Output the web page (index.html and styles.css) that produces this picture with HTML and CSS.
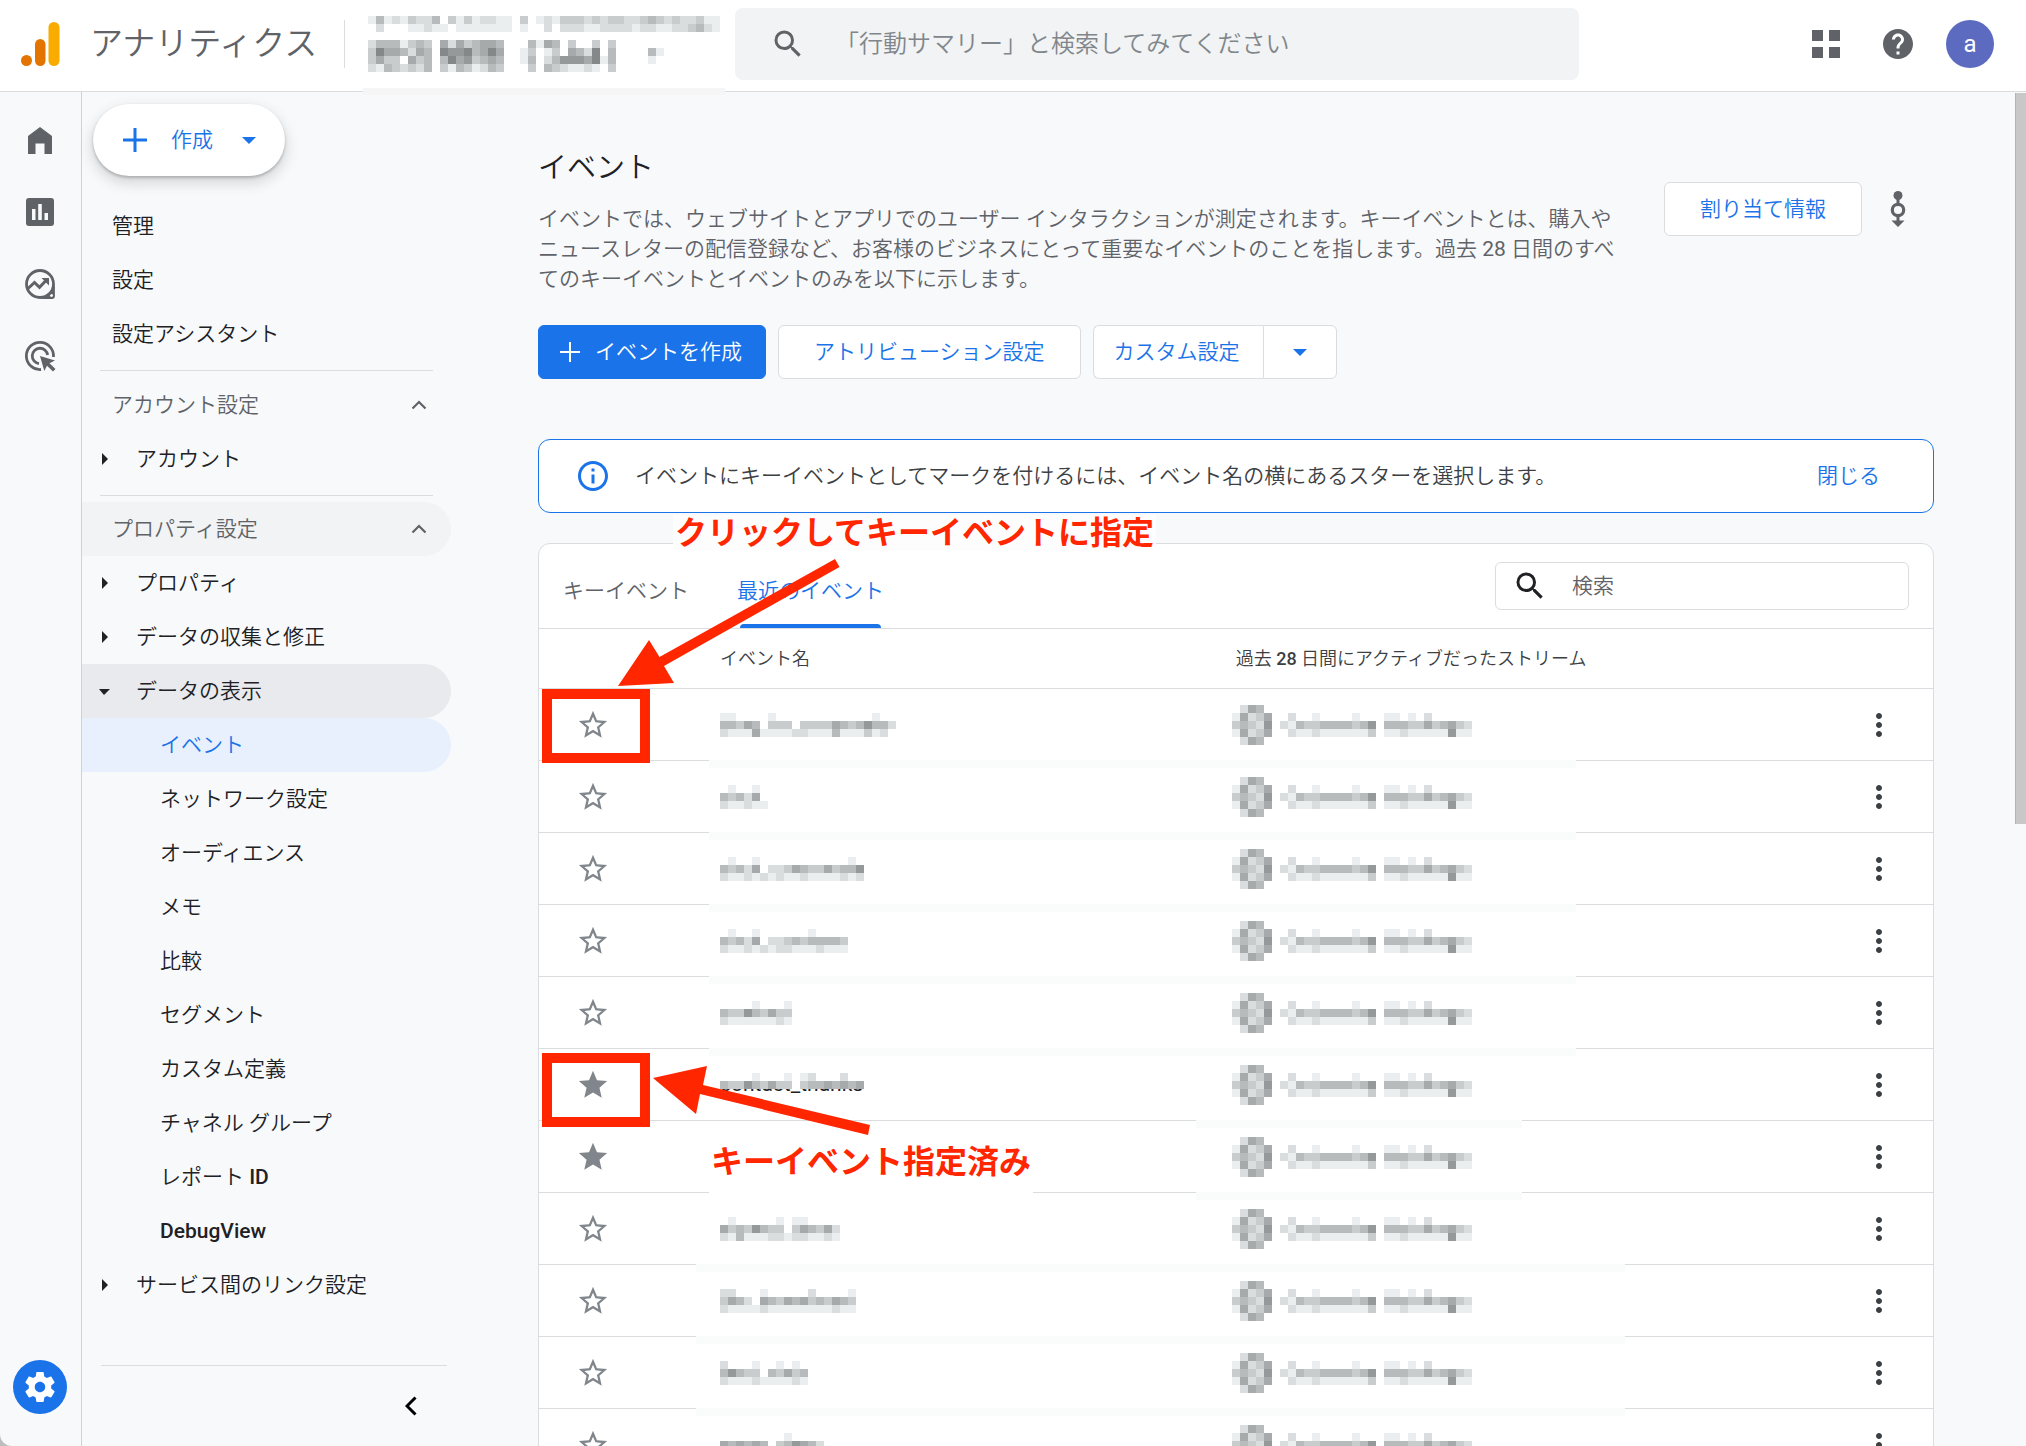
FILE: index.html
```html
<!DOCTYPE html>
<html lang="ja">
<head>
<meta charset="utf-8">
<title>アナリティクス</title>
<meta name="viewport" content="width=device-width, initial-scale=1">
<link rel="stylesheet" href="styles.css">
</head>
<body>
<svg class="sprite" aria-hidden="true">
  <symbol id="star" viewBox="0 0 24 24"><path d="M22 9.24l-7.19-.62L12 2 9.19 8.63 2 9.24l5.46 4.73L5.82 21 12 17.27 18.18 21l-1.63-7.03L22 9.24zM12 15.4l-3.76 2.27 1-4.28-3.32-2.88 4.38-.38L12 6.1l1.71 4.04 4.38.38-3.32 2.88 1 4.28L12 15.4z"/></symbol>
  <symbol id="star-full" viewBox="0 0 24 24"><path d="M12 17.27L18.18 21l-1.64-7.03L22 9.24l-7.19-.61L12 2 9.19 8.63 2 9.24l5.46 4.73L5.82 21z"/></symbol>
  <symbol id="more" viewBox="0 0 24 24"><path d="M12 8c1.1 0 2-.9 2-2s-.9-2-2-2-2 .9-2 2 .9 2 2 2zm0 2c-1.1 0-2 .9-2 2s.9 2 2 2 2-.9 2-2-.9-2-2-2zm0 6c-1.1 0-2 .9-2 2s.9 2 2 2 2-.9 2-2-.9-2-2-2z"/></symbol>
  <symbol id="search" viewBox="0 0 24 24"><path d="M15.5 14h-.79l-.28-.27A6.47 6.47 0 0 0 16 9.5 6.5 6.5 0 1 0 9.5 16c1.61 0 3.09-.59 4.23-1.57l.27.28v.79l5 4.99L20.49 19l-4.99-5zm-6 0C7.01 14 5 11.99 5 9.5S7.01 5 9.5 5 14 7.01 14 9.5 11.99 14 9.5 14z"/></symbol>
  <symbol id="caret" viewBox="0 0 14 7"><path d="M0 0h14L7 7z"/></symbol>
  <symbol id="chevron-up" viewBox="0 0 16 10"><path d="M1.500 8.500L8 2l6.500 6.500" fill="none" stroke="currentColor" stroke-width="2.200"/></symbol>
</svg>

<div class="app">
  <header class="topbar">
    <a class="brand" href="#">
      <svg class="brand-logo" viewBox="0 0 40 46" aria-hidden="true">
        <circle cx="6.500" cy="39.500" r="5.500" fill="#e37400"/>
        <rect x="15" y="18" width="10.500" height="27" rx="5.250" fill="#e37400"/>
        <rect x="28.500" y="1" width="11" height="44" rx="5.500" fill="#f9ab00"/>
      </svg>
      <span class="brand-name">アナリティクス</span>
    </a>
    <div class="property">
      <svg class="mosaic" data-rows="ebedecddbfceceddeefcfedecccdcdccddcbcdcddcee fdfffeedeefeeeeeeefeffdfdddeeddddeddeeddcbde . dbbbecbcfadacbaabfffbeabfcffcfc c8aabdabf8998ba8affecfecfabd8fbffffbe caccfacbfb8a9cbabffebfdb999a8ebffffe debcdcdbfcebcedbcfffcfbcdeedefc"></svg>
    </div>
    <label class="top-search">
      <svg class="icon" aria-hidden="true"><use href="#search"/></svg>
      <input type="search" aria-label="検索" placeholder="「行動サマリー」と検索してみてください">
    </label>
    <div class="top-actions">
      <button class="icon-button" type="button" aria-label="アプリ">
        <svg class="icon" viewBox="0 0 36 36" aria-hidden="true"><path d="M4 4h11v11H4zM21 4h11v11H21zM4 21h11v11H4zM21 21h11v11H21z"/></svg>
      </button>
      <button class="icon-button" type="button" aria-label="ヘルプ">
        <svg class="icon" viewBox="0 0 24 24" aria-hidden="true"><path d="M12 2C6.480 2 2 6.480 2 12s4.480 10 10 10 10-4.480 10-10S17.520 2 12 2zm1 17h-2v-2h2v2zm2.070-7.750l-.9.920C13.450 12.900 13 13.500 13 15h-2v-.5c0-1.100.45-2.100 1.170-2.830l1.240-1.260c.37-.36.59-.86.59-1.410 0-1.100-.9-2-2-2s-2 .9-2 2H8c0-2.210 1.790-4 4-4s4 1.790 4 4c0 .88-.36 1.680-.93 2.250z"/></svg>
      </button>
      <button class="avatar" type="button">a</button>
    </div>
  </header>

  <div class="body">
    <nav class="rail" aria-label="メイン">
      <a href="#" aria-label="ホーム"><svg class="icon" viewBox="0 0 36 36" aria-hidden="true"><path d="M18 5L6 14v18h7.500V21.500h9V32H30V14z"/></svg></a>
      <a href="#" aria-label="レポート"><svg class="icon" viewBox="0 0 36 36" aria-hidden="true"><path fill-rule="evenodd" d="M7 4h22a3 3 0 0 1 3 3v22a3 3 0 0 1-3 3H7a3 3 0 0 1-3-3V7a3 3 0 0 1 3-3zm3 11v11h3.500V15zm6.200-5v16h3.600V10zm6.300 9v7H26v-7z"/></svg></a>
      <a href="#" aria-label="探索"><svg class="icon" viewBox="0 0 36 36" aria-hidden="true"><circle cx="18" cy="18" r="13.500" fill="none" stroke="currentColor" stroke-width="2.800"/><path fill-rule="evenodd" d="M32.900 18v12.500a2.400 2.400 0 0 1-2.400 2.400H18C24 32 31 27 32.900 18zM29.500 28a1.500 1.500 0 1 0 .01 0z"/><path d="M5.500 23l7-6.500 5 4.800 7-7.300" fill="none" stroke="currentColor" stroke-width="3"/><path d="M19.500 12H27v7.500z"/></svg></a>
      <a href="#" aria-label="広告"><svg class="icon" viewBox="0 0 36 36" aria-hidden="true"><path d="M19 31.500A13.600 13.600 0 1 1 31.500 19M17 25.600A7.700 7.700 0 1 1 25.600 17" fill="none" stroke="currentColor" stroke-width="2.800"/><path d="M18 18l15 4.500-5.500 2.700 6 5.800-2.500 2.500-6-5.800-2.700 5.300z"/></svg></a>
      <a class="rail-admin" href="#" aria-label="管理"><svg class="icon" viewBox="0 0 24 24" aria-hidden="true"><path fill-rule="evenodd" d="M19.430 12.980c.04-.32.07-.64.07-.98s-.03-.66-.07-.98l2.110-1.650c.19-.15.24-.42.12-.64l-2-3.460c-.12-.22-.39-.3-.61-.22l-2.490 1c-.52-.4-1.080-.73-1.690-.98l-.38-2.650C14.460 2.180 14.250 2 14 2h-4c-.25 0-.46.18-.49.42l-.38 2.650c-.61.25-1.170.59-1.690.98l-2.490-1c-.23-.09-.49 0-.61.22l-2 3.460c-.13.22-.07.49.12.64l2.110 1.650c-.04.32-.07.65-.07.98s.03.66.07.98l-2.110 1.650c-.19.15-.24.42-.12.64l2 3.460c.12.22.39.3.61.22l2.490-1c.52.4 1.080.73 1.690.98l.38 2.650c.03.24.24.42.49.42h4c.25 0 .46-.18.49-.42l.38-2.650c.61-.25 1.170-.59 1.690-.98l2.490 1c.23.09.49 0 .61-.22l2-3.460c.12-.22.07-.49-.12-.64l-2.110-1.650zM12 15.500c-1.930 0-3.500-1.570-3.500-3.500s1.570-3.500 3.500-3.500 3.500 1.570 3.500 3.500-1.570 3.500-3.500 3.500z"/></svg></a>
    </nav>

    <aside class="sidenav">
      <button class="create" type="button">
        <svg class="plus" viewBox="0 0 24 24" aria-hidden="true"><path d="M10.500 0h3v10.500H24v3H13.500V24h-3V13.500H0v-3h10.500z"/></svg>
        作成
        <svg class="caret" aria-hidden="true"><use href="#caret"/></svg>
      </button>
      <nav aria-label="管理">
        <ul>
          <li><a class="item" href="#">管理</a></li>
          <li><a class="item" href="#">設定</a></li>
          <li><a class="item" href="#">設定アシスタント</a></li>
        </ul>
        <hr>
        <button class="item section" type="button">アカウント設定<svg class="chevron" aria-hidden="true"><use href="#chevron-up"/></svg></button>
        <ul>
          <li><a class="item group" href="#">アカウント</a></li>
        </ul>
        <hr>
        <button class="item section is-hover" type="button">プロパティ設定<svg class="chevron" aria-hidden="true"><use href="#chevron-up"/></svg></button>
        <ul>
          <li><a class="item group" href="#">プロパティ</a></li>
          <li><a class="item group" href="#">データの収集と修正</a></li>
          <li><a class="item group is-open" href="#">データの表示</a>
            <ul>
              <li><a class="item sub is-active" href="#">イベント</a></li>
              <li><a class="item sub" href="#">ネットワーク設定</a></li>
              <li><a class="item sub" href="#">オーディエンス</a></li>
              <li><a class="item sub" href="#">メモ</a></li>
              <li><a class="item sub" href="#">比較</a></li>
              <li><a class="item sub" href="#">セグメント</a></li>
              <li><a class="item sub" href="#">カスタム定義</a></li>
              <li><a class="item sub" href="#">チャネル グループ</a></li>
              <li><a class="item sub" href="#">レポート <span class="latin">ID</span></a></li>
              <li><a class="item sub" href="#"><span class="latin">DebugView</span></a></li>
            </ul>
          </li>
          <li><a class="item group" href="#">サービス間のリンク設定</a></li>
        </ul>
      </nav>
      <div class="sidenav-foot">
        <button class="collapse" type="button" aria-label="折りたたむ">
          <svg viewBox="0 0 12 20" aria-hidden="true"><path d="M10.500 1.500L2 10l8.500 8.500" fill="none" stroke="#000" stroke-width="3"/></svg>
        </button>
      </div>
    </aside>

    <main class="main">
      <div class="page-head">
        <div class="page-intro">
          <h1>イベント</h1>
          <p>イベントでは、ウェブサイトとアプリでのユーザー インタラクションが測定されます。キーイベントとは、購入やニュースレターの配信登録など、お客様のビジネスにとって重要なイベントのことを指します。過去 <span class="figure">28</span> 日間のすべてのキーイベントとイベントのみを以下に示します。</p>
        </div>
        <div class="page-tools">
          <button class="btn quota" type="button">割り当て情報</button>
          <button class="icon-button" type="button" aria-label="変更履歴">
            <svg class="icon" viewBox="0 0 36 36" aria-hidden="true"><circle cx="18" cy="4.500" r="4.500"/><path d="M16.500 7h3v7h-3zM16.500 24h3v6h-3zM11.500 29.500h13L18 36z"/><circle cx="18" cy="19" r="5.700" fill="none" stroke="currentColor" stroke-width="3.200"/></svg>
          </button>
        </div>
      </div>

      <div class="buttons">
        <button class="btn primary" type="button">
          <svg viewBox="0 0 20 20" aria-hidden="true"><path d="M9 0h2v9h9v2h-9v9H9v-9H0V9h9z"/></svg>イベントを作成
        </button>
        <button class="btn wide" type="button">アトリビューション設定</button>
        <div class="split">
          <button class="btn" type="button">カスタム設定</button>
          <button class="btn" type="button" aria-label="その他のカスタム設定"><svg class="caret" aria-hidden="true"><use href="#caret"/></svg></button>
        </div>
      </div>

      <div class="notice">
        <svg class="icon" viewBox="0 0 24 24" aria-hidden="true"><path d="M11 7h2v2h-2zm0 4h2v6h-2zm1-9C6.480 2 2 6.480 2 12s4.480 10 10 10 10-4.480 10-10S17.520 2 12 2zm0 18c-4.410 0-8-3.590-8-8s3.590-8 8-8 8 3.590 8 8-3.590 8-8 8z"/></svg>
        <p>イベントにキーイベントとしてマークを付けるには、イベント名の横にあるスターを選択します。</p>
        <button class="link" type="button">閉じる</button>
      </div>

      <section class="panel">
        <div class="panel-bar">
          <div class="tabs" role="tablist">
            <button role="tab" type="button" aria-selected="false">キーイベント</button>
            <button role="tab" type="button" aria-selected="true">最近のイベント</button>
          </div>
          <label class="panel-search">
            <svg class="icon" aria-hidden="true"><use href="#search"/></svg>
            <input type="search" aria-label="検索" placeholder="検索">
          </label>
        </div>
        <table>
          <colgroup><col class="col-star"><col class="col-name"><col><col class="col-menu"></colgroup>
          <thead>
            <tr><th></th><th>イベント名</th><th>過去 <span class="latin">28</span> 日間にアクティブだったストリーム</th><th></th></tr>
          </thead>
          <tbody>
            <tr class="veil"><td><button class="star" type="button" aria-label="スター"><svg><use href="#star"/></svg></button></td><td><svg class="mosaic" data-rows="eeffffeffffffffffffeff bbcabfcccfccccabcb9bbd deeeaeeeeddeeebeeecedf"></svg></td><td class="stream"></td><td class="menu"></td></tr>
            <tr class="veil"><td><button class="star" type="button" aria-label="スター"><svg><use href="#star"/></svg></button></td><td><svg class="mosaic" data-rows="feffef bcbdaf deedee"></svg></td><td class="stream"></td><td class="menu"></td></tr>
            <tr class="veil"><td><button class="star" type="button" aria-label="スター"><svg><use href="#star"/></svg></button></td><td><svg class="mosaic" data-rows="feffefffffffffffeff bcbdafddcabccacbb9f deedededeedeeeededf"></svg></td><td class="stream"></td><td class="menu"></td></tr>
            <tr class="veil"><td><button class="star" type="button" aria-label="スター"><svg><use href="#star"/></svg></button></td><td><svg class="mosaic" data-rows="feffeffffffeffff bcbdafddcbcbbbbc deedededdeeedeee"></svg></td><td class="stream"></td><td class="menu"></td></tr>
            <tr class="veil"><td><button class="star" type="button" aria-label="スター"><svg><use href="#star"/></svg></button></td><td><svg class="mosaic" data-rows="ffffefffe bcc9bcacc deeeeeede"></svg></td><td class="stream"></td><td class="menu"></td></tr>
            <tr class="veil veil-right"><td><button class="star" type="button" aria-label="スター"><svg><use href="#star-full"/></svg></button></td><td><div class="covered"><span>contact_thanks</span><svg class="mosaic" data-rows="ffffefffefedfffdfff bcc9bcaccfcbbababaf"></svg></div></td><td class="stream"></td><td class="menu"></td></tr>
            <tr class="veil veil-right"><td><button class="star" type="button" aria-label="スター"><svg><use href="#star-full"/></svg></button></td><td></td><td class="stream"></td><td class="menu"></td></tr>
            <tr class="veil veil-wide"><td><button class="star" type="button" aria-label="スター"><svg><use href="#star"/></svg></button></td><td><svg class="mosaic" data-rows="fefffffefeeffff acbc9bccfcabcad debeeeddeddeede"></svg></td><td class="stream"></td><td class="menu"></td></tr>
            <tr class="veil veil-wide"><td><button class="star" type="button" aria-label="スター"><svg><use href="#star"/></svg></button></td><td><svg class="mosaic" data-rows="ddfffefffffdffffe cabdfabcabacbcabc deeeedeeeeeeeedee"></svg></td><td class="stream"></td><td class="menu"></td></tr>
            <tr class="veil veil-wide"><td><button class="star" type="button" aria-label="スター"><svg><use href="#star"/></svg></button></td><td><svg class="mosaic" data-rows="dfffeffefef b9bccfbcacb deeedeeeede"></svg></td><td class="stream"></td><td class="menu"></td></tr>
            <tr><td><button class="star" type="button" aria-label="スター"><svg><use href="#star"/></svg></button></td><td><svg class="mosaic" data-rows="ffffffffeffff abababfcb9abd deeeddeeedede"></svg></td><td class="stream"></td><td class="menu"></td></tr>
          </tbody>
        </table>

        <span class="note note-click">クリックしてキーイベントに指定</span>
        <span class="note note-done">キーイベント指定済み</span>
        <svg class="marks" viewBox="0 0 340 600" aria-hidden="true">
          <path d="M296 15L120.500 113 110 96 79 142 135 139 125 122 300.500 23z"/>
          <path d="M114 534L168 522 164 541 331 581 329 591 161 550 157 570z"/>
          <path fill="none" stroke="currentColor" stroke-width="10" d="M8 150h98v64H8zM8 514h98v64H8z"/>
        </svg>
      </section>
    </main>
    <div class="scrollbar" aria-hidden="true"><div class="thumb"></div></div>
  </div>
</div>
<script src="page.js"></script>
</body>
</html>
```
FILE: styles.css
```css
* { box-sizing: border-box; }

html {
  background: #bdbdbd;
}

body {
  margin: 0;
  color: #202124;
  font: 350 21px/30px Roboto, "Noto Sans CJK JP", sans-serif;
}

button, input {
  font: inherit;
  color: inherit;
  background: none;
  border: 0;
  padding: 0;
  margin: 0;
}

a { color: inherit; text-decoration: none; }
ul { list-style: none; margin: 0; padding: 0; }
svg { display: block; fill: currentColor; flex: none; }
.sprite { position: absolute; width: 0; height: 0; }
.icon { width: 36px; height: 36px; }
.caret { width: 14px; height: 7px; }
.latin { font-weight: 500; }
.figure { font-weight: 400; }
.mosaic { shape-rendering: crispEdges; }

.app {
  display: flex;
  flex-direction: column;
  height: 100vh;
  overflow: hidden;
  background: #f8f9fb;
  border-bottom-left-radius: 12px;
}

/* Top bar */
.topbar {
  position: relative;
  display: flex;
  align-items: center;
  flex: none;
  height: 92px;
  padding: 0 32px 4px 20px;
  background: #fff;
  border-bottom: 1px solid #dadce0;
}

.brand { display: flex; align-items: center; gap: 30px; color: #5f6368; }
.brand-logo { width: 40px; height: 46px; }
.brand-name { font-size: 33px; line-height: 48px; width: 234px; white-space: nowrap; }

.property {
  height: 48px;
  margin-left: 20px;
  padding-left: 23px;
  width: 391px;
  border-left: 1px solid #dadce0;
}
.property .mosaic { margin-top: -4px; }
.property::after {
  content: "";
  position: absolute;
  top: 88px;
  left: 363px;
  width: 362px;
  height: 7px;
  background: #f6f6f6;
}

.top-search {
  display: flex;
  align-items: center;
  flex: 0 1 844px;
  gap: 29px;
  height: 72px;
  padding: 0 35px;
  background: #f1f3f4;
  border-radius: 8px;
  color: #5f6368;
}
.top-search input { flex: 1; min-width: 0; font-size: 24px; line-height: 36px; outline: 0; }
.top-search input::placeholder { color: #80868b; opacity: 1; }

.top-actions { display: flex; align-items: center; gap: 36px; margin-left: auto; color: #5f6368; }
.icon-button { color: #5f6368; }
.avatar {
  width: 48px;
  height: 48px;
  margin-left: -6px;
  border-radius: 50%;
  background: #5c6bc0;
  color: #fff;
  font-size: 24px;
  font-weight: 400;
}

/* Icon rail */
.body { display: flex; flex: 1; min-height: 0; }

.rail {
  display: flex;
  flex-direction: column;
  align-items: center;
  gap: 36px;
  flex: none;
  width: 82px;
  padding: 30px 1px 32px 0;
  border-right: 1px solid #cfd1d4;
  color: #5f6368;
}
.rail-admin {
  display: grid;
  place-items: center;
  width: 54px;
  height: 54px;
  margin-top: auto;
  border-radius: 50%;
  background: #1a73e8;
  color: #fff;
}

/* Admin navigation */
.sidenav { display: flex; flex-direction: column; flex: none; width: 370px; padding-top: 12px; }

.create {
  display: flex;
  align-items: center;
  align-self: flex-start;
  height: 72px;
  margin: 0 0 23px 11px;
  padding: 0 29px 0 30px;
  border-radius: 36px;
  background: #fff;
  color: #1a73e8;
  box-shadow: 0 2px 3px rgba(60, 64, 67, .3), 0 6px 12px 3px rgba(60, 64, 67, .15);
}
.create .plus { width: 24px; height: 24px; margin-right: 24px; }
.create .caret { margin-left: 29px; }

.sidenav hr { height: 1px; margin: 9px 19px 7px 18px; border: 0; background: #dadce0; width: 333px; }
.sidenav hr + .is-hover { margin-top: -1px; }

.item {
  display: flex;
  align-items: center;
  width: 369px;
  height: 54px;
  padding: 0 24px 0 30px;
  border-radius: 0 27px 27px 0;
  text-align: left;
  white-space: pre;
}
.section { justify-content: space-between; color: #5f6368; }
.chevron { width: 16px; height: 10px; }
.group { padding-left: 17px; }
.group::before {
  content: "";
  flex: none;
  width: 11px;
  height: 12px;
  margin-right: 26px;
  background: #202124;
  clip-path: polygon(3px 0, 9px 6px, 3px 12px);
}
.group.is-open::before { clip-path: polygon(0 4px, 11px 4px, 5px 10px); }
.sub { padding-left: 78px; }
.is-hover { background: #f1f3f4; }
.is-open { background: #e8eaed; }
.is-active { background: #e8f0fe; color: #1a73e8; }

.sidenav-foot {
  display: flex;
  justify-content: flex-end;
  margin: auto 5px 0 19px;
  padding: 30px;
  border-top: 1px solid #dadce0;
}
.collapse svg { width: 12px; height: 20px; }

/* Main column */
.main { flex: 1; min-width: 0; padding: 56px 81px 0 86px; overflow: hidden; }

.page-head { display: flex; justify-content: space-between; align-items: flex-start; gap: 24px; }
.page-intro { max-width: 1092px; }
h1 { margin: 0 0 16px; font-size: 29px; line-height: 40px; font-weight: 350; }
.page-intro p { margin: 0; color: #5f6368; }
.page-tools { display: flex; align-items: center; gap: 18px; padding: 34px 18px 0 0; }

.btn {
  display: flex;
  align-items: center;
  justify-content: center;
  height: 54px;
  padding: 0 20px;
  border: 1px solid #dadce0;
  border-radius: 6px;
  background: #fff;
  color: #1a73e8;
  white-space: nowrap;
}
.btn.quota { padding: 0 35px; }
.btn.wide { padding: 0 35px; }
.btn.primary { gap: 15px; padding: 0 23px 0 21px; background: #1a73e8; border-color: #1a73e8; color: #fff; }
.btn.primary svg { width: 20px; height: 20px; }

.buttons { display: flex; gap: 12px; margin-top: 31px; }
.split { display: flex; }
.split .btn:first-child { padding: 0 23px 0 20px; border-right: 0; border-radius: 6px 0 0 6px; }
.split .btn:last-child { width: 74px; border-radius: 0 6px 6px 0; }

.notice {
  display: flex;
  align-items: center;
  gap: 24px;
  min-height: 74px;
  margin-top: 60px;
  padding: 0 53px 0 36px;
  background: #fff;
  border: 1px solid #1a73e8;
  border-radius: 12px;
  color: #3c4043;
}
.notice .icon { color: #1a73e8; }
.notice p { flex: 1; margin: 0; }
.link { color: #1a73e8; }

/* Events panel */
.panel {
  position: relative;
  margin-top: 30px;
  background: #fff;
  border: 1px solid #dadce0;
  border-radius: 12px;
}
.panel-bar {
  display: flex;
  justify-content: space-between;
  align-items: center;
  height: 85px;
  padding: 0 24px;
  border-bottom: 1px solid #dadce0;
}
.tabs { display: flex; gap: 48px; align-self: stretch; }
.tabs button { position: relative; padding-top: 10px; color: #5f6368; }
.tabs [aria-selected="true"] { color: #1a73e8; }
.tabs [aria-selected="true"]::after {
  content: "";
  position: absolute;
  inset: auto 3px 0;
  height: 4px;
  border-radius: 4px 4px 0 0;
  background: #1a73e8;
}
.panel-search {
  display: flex;
  align-items: center;
  gap: 24px;
  width: 414px;
  height: 48px;
  padding: 0 16px;
  border: 1px solid #dadce0;
  border-radius: 6px;
}
.panel-search input { flex: 1; min-width: 0; outline: 0; }
.panel-search input::placeholder { color: #5f6368; opacity: 1; }

table { width: 100%; table-layout: fixed; border-collapse: separate; border-spacing: 0; }
.col-star { width: 181px; }
.col-name { width: 37%; }
.col-menu { width: 108px; }
th, td { padding: 0; text-align: left; border-bottom: 1px solid #dadce0; }
th { height: 60px; font-size: 18px; font-weight: 350; color: #3c4043; }
td { height: 72px; }
tbody tr { position: relative; }

.star { display: block; margin-left: 37px; color: #80868b; }
.star svg { width: 34px; height: 34px; }
.menu button { display: block; margin: 0 auto; color: #3c4043; }
.stream .mosaic { margin-left: -4px; }

.covered { position: relative; height: 24px; font-size: 21px; line-height: 22px; font-weight: 400; }
.covered .mosaic { position: absolute; top: 0; left: 0; background: #fff; }

/* Pale strip over the line below a row */
.veil .menu::after {
  content: "";
  position: absolute;
  left: 170px;
  bottom: -7px;
  z-index: 1;
  width: 867px;
  height: 8px;
  background: #fafcfb;
}
.veil-right .menu::after { left: 657px; width: 326px; }
.veil-wide .menu::after { left: 157px; width: 929px; }

/* Hand-made annotations lying over the panel */
.marks { position: absolute; z-index: 3; top: 0; left: 0; width: 340px; height: 600px; color: #ff2600; }
.note {
  position: absolute;
  z-index: 2;
  padding: 0 2px;
  background: #fdfdfe;
  color: #ff2600;
  font-size: 32px;
  line-height: 36px;
  font-weight: 700;
  white-space: nowrap;
}
.note-click { top: -29px; left: 134px; }
.note-done { top: 600px; left: 170px; padding-bottom: 14px; background: #fff; }

.scrollbar { flex: none; width: 11px; padding-top: 1px; }
.thumb { height: 54%; background: #c8c8c8; border-left: 1px solid #b5b5b5; }
```
FILE: page.js
```js
// Draws the pixelated blocks: one hex digit of grey per 8px cell, "." is empty.
const CELL = 8;
const NS = "http://www.w3.org/2000/svg";

function drawMosaic(svg) {
  const rows = svg.dataset.rows.split(" ");
  const columns = Math.max(...rows.map((row) => row.length));
  svg.setAttribute("width", columns * CELL);
  svg.setAttribute("height", rows.length * CELL);
  svg.setAttribute("aria-hidden", "true");
  rows.forEach((row, y) => {
    [...row].forEach((digit, x) => {
      if (digit === "." || digit === "f") return;
      const level = parseInt(digit, 16) * 17;
      const rect = document.createElementNS(NS, "rect");
      rect.setAttribute("x", x * CELL);
      rect.setAttribute("y", y * CELL);
      rect.setAttribute("width", CELL);
      rect.setAttribute("height", CELL);
      rect.setAttribute("fill", `rgb(${level - 3}, ${level}, ${level + 1})`);
      svg.append(rect);
    });
  });
}

document.querySelectorAll(".stream").forEach((cell) => {
  cell.innerHTML = '<svg class="mosaic" data-rows="fdabf eadca.fdffeffffefffeefefdfffff cbcd9.debccbbbbcb9fbbbccacbacd eadca.fdeedeeeeeecfeedeeeee9ee fdabf"></svg>';
});

document.querySelectorAll(".menu").forEach((cell) => {
  cell.innerHTML = '<button type="button" aria-label="その他"><svg class="icon"><use href="#more"/></svg></button>';
});

document.querySelectorAll(".mosaic").forEach(drawMosaic);
```
